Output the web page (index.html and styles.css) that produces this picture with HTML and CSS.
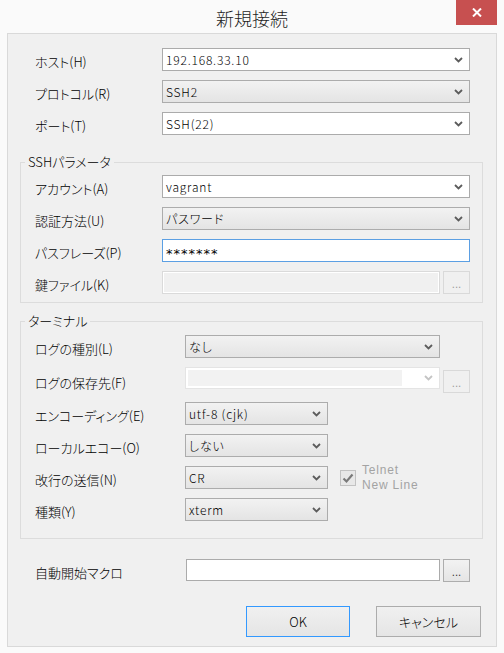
FILE: index.html
```html
<!DOCTYPE html>
<html lang="ja">
<head>
  <meta charset="UTF-8" />
  <title>新規接続</title>
  <link rel="stylesheet" href="styles.css">
</head>
<body>

<div class="window">
  <div class="titlebar">
    <div></div>
    <div class="title">新規接続</div>
    <div class="close">
      <svg width="10" height="9" viewBox="0 0 10 9"><path d="M1 0.5 L9 8.5 M9 0.5 L1 8.5" stroke="#fff" stroke-width="2" fill="none"/></svg>
    </div>
  </div>

  <div class="client">
    <div class="top">
      <div class="row">
        <div class="lbl">ホスト(H)</div>
        <div class="combo edit grow"><span class="val">192.168.33.10</span><svg class="chev" width="9" height="6" viewBox="0 0 9 6"><path d="M1 1 L4.5 4.5 L8 1" stroke="#5c5c5c" stroke-width="1.8" fill="none"/></svg></div>
      </div>
      <div class="row">
        <div class="lbl">プロトコル(R)</div>
        <div class="combo list grow"><span class="val">SSH2</span><svg class="chev" width="9" height="6" viewBox="0 0 9 6"><path d="M1 1 L4.5 4.5 L8 1" stroke="#5c5c5c" stroke-width="1.8" fill="none"/></svg></div>
      </div>
      <div class="row">
        <div class="lbl">ポート(T)</div>
        <div class="combo edit grow"><span class="val">SSH(22)</span><svg class="chev" width="9" height="6" viewBox="0 0 9 6"><path d="M1 1 L4.5 4.5 L8 1" stroke="#5c5c5c" stroke-width="1.8" fill="none"/></svg></div>
      </div>
    </div>

    <fieldset class="group ssh">
      <legend>SSHパラメータ</legend>
      <div class="rows">
        <div class="row">
          <div class="lbl">アカウント(A)</div>
          <div class="combo edit grow"><span class="val">vagrant</span><svg class="chev" width="9" height="6" viewBox="0 0 9 6"><path d="M1 1 L4.5 4.5 L8 1" stroke="#5c5c5c" stroke-width="1.8" fill="none"/></svg></div>
        </div>
        <div class="row">
          <div class="lbl">認証方法(U)</div>
          <div class="combo list grow"><span class="val">パスワード</span><svg class="chev" width="9" height="6" viewBox="0 0 9 6"><path d="M1 1 L4.5 4.5 L8 1" stroke="#5c5c5c" stroke-width="1.8" fill="none"/></svg></div>
        </div>
        <div class="row">
          <div class="lbl">パスフレーズ(P)</div>
          <div class="combo pass grow"><span class="val stars">*******</span></div>
        </div>
        <div class="row">
          <div class="lbl">鍵ファイル(K)</div>
          <div class="combo off grow"></div>
          <div class="dots disabled">...</div>
        </div>
      </div>
    </fieldset>

    <fieldset class="group term">
      <legend>ターミナル</legend>
      <div class="rows">
        <div class="row">
          <div class="lbl">ログの種別(L)</div>
          <div class="combo list wide"><span class="val">なし</span><svg class="chev" width="9" height="6" viewBox="0 0 9 6"><path d="M1 1 L4.5 4.5 L8 1" stroke="#5c5c5c" stroke-width="1.8" fill="none"/></svg></div>
        </div>
        <div class="row">
          <div class="lbl">ログの保存先(F)</div>
          <div class="combo offlist wide"><span class="val inner"></span><svg class="chev" width="9" height="6" viewBox="0 0 9 6"><path d="M1 1 L4.5 4.5 L8 1" stroke="#c4c4c4" stroke-width="1.8" fill="none"/></svg></div>
          <div class="dots disabled low">...</div>
        </div>
        <div class="row">
          <div class="lbl">エンコーディング(E)</div>
          <div class="combo list short"><span class="val">utf-8 (cjk)</span><svg class="chev" width="9" height="6" viewBox="0 0 9 6"><path d="M1 1 L4.5 4.5 L8 1" stroke="#5c5c5c" stroke-width="1.8" fill="none"/></svg></div>
        </div>
        <div class="row">
          <div class="lbl">ローカルエコー(O)</div>
          <div class="combo list short"><span class="val">しない</span><svg class="chev" width="9" height="6" viewBox="0 0 9 6"><path d="M1 1 L4.5 4.5 L8 1" stroke="#5c5c5c" stroke-width="1.8" fill="none"/></svg></div>
        </div>
        <div class="row">
          <div class="lbl">改行の送信(N)</div>
          <div class="combo list short"><span class="val">CR</span><svg class="chev" width="9" height="6" viewBox="0 0 9 6"><path d="M1 1 L4.5 4.5 L8 1" stroke="#5c5c5c" stroke-width="1.8" fill="none"/></svg></div>
          <div class="check">
            <svg width="12" height="11" viewBox="0 0 12 11"><path d="M1.5 5.5 L4.5 8.5 L10.5 1.5" stroke="#7a7a7a" stroke-width="2.2" fill="none"/></svg>
          </div>
          <div class="telnet">Telnet<br>New Line</div>
        </div>
        <div class="row">
          <div class="lbl">種類(Y)</div>
          <div class="combo list short"><span class="val">xterm</span><svg class="chev" width="9" height="6" viewBox="0 0 9 6"><path d="M1 1 L4.5 4.5 L8 1" stroke="#5c5c5c" stroke-width="1.8" fill="none"/></svg></div>
        </div>
      </div>
    </fieldset>

    <div class="macro row">
      <div class="lbl">自動開始マクロ</div>
      <div class="combo edit macro-input"></div>
      <div class="dots">...</div>
    </div>

    <div class="buttons">
      <div class="btn default">OK</div>
      <div class="btn">キャンセル</div>
    </div>
  </div>
</div>

</body>
</html>
```

FILE: styles.css
```css
body {
    margin: 0;
    background-color: #fafafa;
    font-family: "Noto Sans CJK JP", sans-serif;
    color: #000;
}

.window {
    width: 504px;
    height: 653px;
}

.titlebar {
    height: 33px;
    display: grid;
    grid-template-columns: 48px 1fr 48px;
}

.title {
    text-align: center;
    font-size: 18px;
    font-weight: 300;
    line-height: 33px;
    padding-top: 2px;
    color: #1e1e1e;
}

.close {
    width: 41px;
    height: 25px;
    background-color: #c75050;
    display: flex;
    align-items: center;
    justify-content: center;
}

.client {
    margin: 0 7px;
    height: 614px;
    box-sizing: border-box;
    border: 1px solid #d9d9d9;
    background-color: #f0f0f0;
    padding-top: 14px;
}

.row {
    display: flex;
    align-items: center;
}

.row + .row {
    margin-top: 9px;
}

.lbl {
    font-size: 13px;
    font-weight: 300;
    font-feature-settings: "palt";
    padding-top: 4px;
    flex-shrink: 0;
}

.top {
    padding: 0 26px 0 27px;
}

.top .lbl {
    width: 127px;
}

.group {
    margin: 18px 13px 0 12px;
    padding: 0;
    border: 1px solid #dcdcdc;
    min-width: 0;
}

.group legend {
    margin-left: 4px;
    padding: 0 3px;
    font-size: 13px;
    font-weight: 300;
    line-height: 18px;
    font-feature-settings: "palt";
}

.group .rows {
    padding: 0 12px 0 14px;
}

.ssh .rows {
    padding-top: 4px;
    padding-bottom: 8px;
}

.ssh .lbl {
    width: 127px;
}

.term {
    margin-top: 9px;
}

.term .rows {
    padding-top: 5px;
    padding-bottom: 17px;
}

.term .lbl {
    width: 150px;
}

/* combo boxes and edits */
.combo {
    height: 23px;
    box-sizing: border-box;
    border: 1px solid #acacac;
    display: flex;
    align-items: center;
    padding-left: 3px;
    font-family: "Noto Sans CJK JP", sans-serif;
    font-size: 12px;
    font-weight: 300;
    letter-spacing: 0.8px;
    font-feature-settings: "palt";
    white-space: nowrap;
    overflow: hidden;
}

.combo .val {
    flex: 1;
}

.combo .chev {
    margin-right: 6px;
    flex-shrink: 0;
}

.grow {
    flex: 1;
}

.wide {
    width: 255px;
}

.short {
    width: 143px;
}

.edit {
    background-color: #fff;
    border-color: #ababab;
}

.list {
    background: linear-gradient(#f2f2f2, #e4e4e4);
}

.pass {
    background-color: #fff;
    border-color: #5b9fe3;
}

.stars {
    font-family: "DejaVu Sans", sans-serif;
    font-weight: normal;
    letter-spacing: 1px;
    font-size: 13px;
    padding-top: 5px;
}

.off {
    background-color: #f0f0f0;
    border-color: #dadada;
    box-shadow: inset 0 0 0 1px #fff;
}

.offlist {
    height: 22px;
    background-color: #fff;
    border-color: #e4e4e4;
    padding: 2px;
    align-self: flex-start;
}

.offlist .inner {
    height: 16px;
    background-color: #f2f2f2;
    margin-right: 22px;
}

.offlist .chev {
    margin-right: 4px;
}

.dots {
    width: 27px;
    height: 23px;
    box-sizing: border-box;
    margin-left: 3px;
    border: 1px solid #adadad;
    background: linear-gradient(#f2f2f2, #e5e5e5);
    font-family: "DejaVu Sans", sans-serif;
    font-size: 10px;
    color: #333;
    display: flex;
    align-items: flex-end;
    justify-content: center;
    padding-bottom: 3px;
    flex-shrink: 0;
}

.dots.disabled {
    background: #f0f0f0;
    border-color: #d9d9d9;
    color: #9a9a9a;
}

.dots.low {
    align-self: flex-start;
    margin-top: 3px;
}

.check {
    width: 16px;
    height: 16px;
    box-sizing: border-box;
    margin: 4px 0 0 12px;
    align-self: flex-start;
    border: 1px solid #c2c2c2;
    background-color: #e8e8e8;
    display: flex;
    align-items: center;
    justify-content: center;
}

.telnet {
    align-self: flex-start;
    height: 23px;
    margin: -3px 0 0 6px;
    font-family: "Liberation Sans", sans-serif;
    letter-spacing: 0.8px;
    font-size: 12px;
    line-height: 15px;
    color: #a3a3a3;
    white-space: nowrap;
}

.macro {
    margin-top: 20px;
    padding: 0 26px 0 27px;
}

.macro .lbl {
    width: 151px;
}

.macro-input {
    width: 254px;
    height: 22px;
    align-self: flex-start;
}

.buttons {
    margin-top: 24px;
    padding-right: 15px;
    display: flex;
    justify-content: flex-end;
    gap: 26px;
}

.btn {
    width: 105px;
    height: 31px;
    box-sizing: border-box;
    border: 1px solid #acacac;
    background: linear-gradient(#f0f0f0, #e5e5e5);
    display: flex;
    align-items: center;
    justify-content: center;
    font-size: 13px;
    font-weight: 300;
    font-feature-settings: "palt";
}

.btn.default {
    width: 104px;
    border-color: #3399ff;
}
```
